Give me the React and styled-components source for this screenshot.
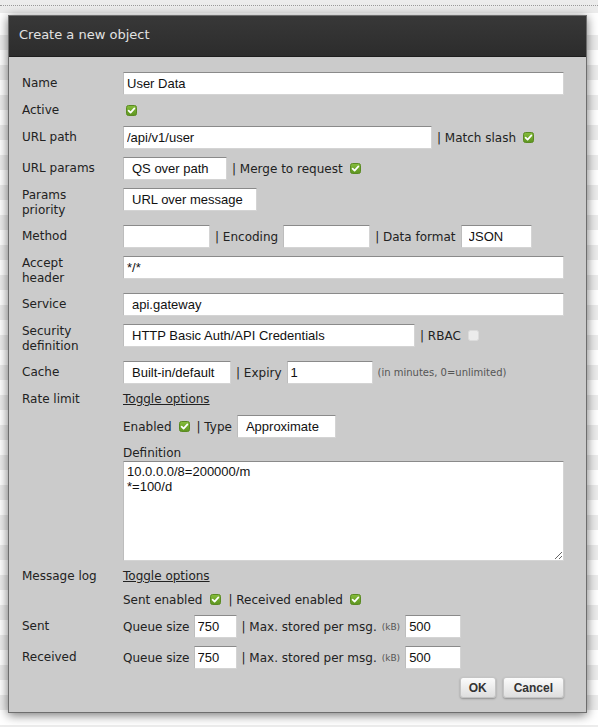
import React from 'react'
import styled, { createGlobalStyle } from 'styled-components'

const GlobalStyle = createGlobalStyle`
  html, body {
    margin: 0;
    padding: 0;
  }
  body {
    min-height: 727px;
    background-color: #fff;
    background-image: repeating-linear-gradient(
      to bottom,
      #ffffff 0px,
      #ffffff 15px,
      #ececec 15px,
      #ececec 30px
    );
    background-position: 0 20px;
    font-family: "DejaVu Sans", Verdana, sans-serif;
    color: #222;
  }
`

const Page = styled.div`
  padding: 5px 11px 12px 8px;
`

const TopRule = styled.div`
  border-top: 1px dotted #9a9a9a;
  margin: 0 -11px 9px -8px;
`

const Dialog = styled.div`
  width: 579px;
  background: #cbcbcb;
  border: 1px solid #6e6e6e;
  box-sizing: border-box;
  box-shadow: 0 2px 10px rgba(0, 0, 0, 0.55);
`

const Header = styled.div`
  height: 40px;
  line-height: 37px;
  padding-left: 10px;
  background: linear-gradient(to bottom, #383838, #2c2c2c);
  border-bottom: 1px solid #1e1e1e;
  color: #e2e2e2;
  font-size: 13px;
`

const Body = styled.div`
  padding: 15px 22px 14px 13px;
`

const Row = styled.div`
  display: flex;
  align-items: flex-start;
  margin-bottom: 8px;
`

const Label = styled.div`
  width: 101px;
  flex-shrink: 0;
  font-size: 12px;
  line-height: ${p => p.$lh || 23}px;
`

const Field = styled.div`
  flex: 1;
  display: flex;
  align-items: center;
  flex-wrap: wrap;
  font-size: 12px;
  min-height: ${p => p.$h || 23}px;
`

const Input = styled.input`
  box-sizing: border-box;
  width: ${p => p.$w}px;
  height: 23px;
  margin: 0 0 0 ${p => p.$ml || 0}px;
  padding: 0 0 0 ${p => p.$pad || 3}px;
  border: 1px solid #d4d4d4;
  border-top-color: #8a8a8a;
  border-left-color: #bdbdbd;
  background: #fff;
  font-family: "Liberation Sans", Arial, sans-serif;
  font-size: 13px;
  color: #111;
  outline: none;
`

const Area = styled.textarea`
  box-sizing: border-box;
  display: block;
  width: 441px;
  height: 100px;
  margin: 0;
  padding: 2px 3px;
  border: 1px solid #d4d4d4;
  border-top-color: #8a8a8a;
  border-left-color: #bdbdbd;
  background: #fff;
  font-family: "Liberation Sans", Arial, sans-serif;
  font-size: 13px;
  line-height: 15px;
  color: #111;
  outline: none;
`

const Sep = styled.span`
  margin: 0 5px 0 ${p => p.$ml ?? 5}px;
  white-space: nowrap;
`

const Hint = styled.span`
  margin-left: ${p => p.$ml ?? 5}px;
  font-size: ${p => p.$size || 10}px;
  color: #555;
  white-space: nowrap;
`

const Toggle = styled.a`
  color: #222;
  text-decoration: underline;
  font-size: 12px;
  line-height: 15px;
  cursor: pointer;
`

const Stack = styled.div`
  display: flex;
  flex-direction: column;
`

const Caption = styled.div`
  font-size: 12px;
  line-height: 15px;
`

const Box = styled.span`
  display: inline-flex;
  margin-left: ${p => p.$ml ?? 7}px;
  width: 11px;
  height: 11px;
`

const Buttons = styled.div`
  display: flex;
  justify-content: flex-end;
  gap: 7px;
  margin-top: 2px;
`

const Button = styled.button`
  height: 21px;
  padding: 0 ${p => p.$px || 10}px;
  border: 1px solid #c4c4c4;
  border-radius: 3px;
  background: linear-gradient(to bottom, #fbfbfb, #dedede);
  box-shadow: 0 1px 2px rgba(0, 0, 0, 0.3);
  font-family: "Liberation Sans", Arial, sans-serif;
  font-weight: bold;
  font-size: 12px;
  color: #333;
`

// green rounded tick box, or a pale empty one
const Check = ({ on = true, ml }) => (
  <Box $ml={ml}>
    <svg width="11" height="11" viewBox="0 0 11 11">
      <defs>
        <linearGradient id="cbg" x1="0" y1="0" x2="0" y2="1">
          <stop offset="0" stopColor="#86bd3c" />
          <stop offset="1" stopColor="#5d9420" />
        </linearGradient>
      </defs>
      {on ? (
        <>
          <rect x="0.5" y="0.5" width="10" height="10" rx="2" fill="url(#cbg)" stroke="#5a8a22" />
          <path d="M2.6 5.6 L4.6 7.6 L8.4 3.4" fill="none" stroke="#fff" strokeWidth="1.7" strokeLinecap="round" strokeLinejoin="round" />
        </>
      ) : (
        <rect x="0.5" y="0.5" width="10" height="10" rx="2" fill="#ececec" stroke="#dcdcdc" />
      )}
    </svg>
  </Box>
)

const App = () => (
  <>
    <GlobalStyle />
    <Page>
      <TopRule />
      <Dialog>
        <Header>Create a new object</Header>
        <Body>
          <Row>
            <Label>Name</Label>
            <Field>
              <Input $w={441} defaultValue="User Data" />
            </Field>
          </Row>
          <Row>
            <Label $lh={15}>Active</Label>
            <Field $h={15}>
              <Check ml={3} />
            </Field>
          </Row>
          <Row>
            <Label>URL path</Label>
            <Field>
              <Input $w={309} defaultValue="/api/v1/user" />
              <Sep>| Match slash</Sep>
              <Check ml={2} />
            </Field>
          </Row>
          <Row>
            <Label>URL params</Label>
            <Field>
              <Input $w={104} $pad={8} defaultValue="QS over path" />
              <Sep>| Merge to request</Sep>
              <Check ml={2} />
            </Field>
          </Row>
          <Row>
            <Label $lh={14.5}>Params<br />priority</Label>
            <Field>
              <Input $w={134} $pad={8} defaultValue="URL over message" />
            </Field>
          </Row>
          <Row>
            <Label>Method</Label>
            <Field>
              <Input $w={87} />
              <Sep>| Encoding</Sep>
              <Input $w={87} />
              <Sep>| Data format</Sep>
              <Input $w={71} $pad={7} defaultValue="JSON" />
            </Field>
          </Row>
          <Row>
            <Label $lh={14.5}>Accept<br />header</Label>
            <Field>
              <Input $w={441} defaultValue="*/*" />
            </Field>
          </Row>
          <Row>
            <Label>Service</Label>
            <Field>
              <Input $w={441} $pad={8} defaultValue="api.gateway" />
            </Field>
          </Row>
          <Row>
            <Label $lh={14.5}>Security<br />definition</Label>
            <Field>
              <Input $w={292} $pad={8} defaultValue="HTTP Basic Auth/API Credentials" />
              <Sep>| RBAC</Sep>
              <Check on={false} ml={2} />
            </Field>
          </Row>
          <Row>
            <Label>Cache</Label>
            <Field>
              <Input $w={108} $pad={8} defaultValue="Built-in/default" />
              <Sep>| Expiry</Sep>
              <Input $w={86} defaultValue="1" />
              <Hint>(in minutes, 0=unlimited)</Hint>
            </Field>
          </Row>
          <Row>
            <Label $lh={15}>Rate limit</Label>
            <Field $h={15}>
              <Toggle>Toggle options</Toggle>
            </Field>
          </Row>
          <Row>
            <Label />
            <Field>
              Enabled
              <Check ml={7} />
              <Sep $ml={7}>| Type</Sep>
              <Input $w={99} $pad={8} defaultValue="Approximate" />
            </Field>
          </Row>
          <Row>
            <Label />
            <Stack>
              <Caption>Definition</Caption>
              <Area defaultValue={'10.0.0.0/8=200000/m\n*=100/d'} />
            </Stack>
          </Row>
          <Row>
            <Label $lh={15}>Message log</Label>
            <Field $h={15}>
              <Toggle>Toggle options</Toggle>
            </Field>
          </Row>
          <Row>
            <Label $lh={15} />
            <Field $h={15}>
              Sent enabled
              <Check ml={8} />
              <Sep $ml={7}>| Received enabled</Sep>
              <Check ml={2} />
            </Field>
          </Row>
          <Row>
            <Label>Sent</Label>
            <Field>
              Queue size
              <Input $w={43} $ml={4} defaultValue="750" />
              <Sep>| Max. stored per msg.</Sep>
              <Hint $ml={0} $size={9}>(kB)</Hint>
              <Input $w={56} $ml={5} defaultValue="500" />
            </Field>
          </Row>
          <Row>
            <Label>Received</Label>
            <Field>
              Queue size
              <Input $w={43} $ml={4} defaultValue="750" />
              <Sep>| Max. stored per msg.</Sep>
              <Hint $ml={0} $size={9}>(kB)</Hint>
              <Input $w={56} $ml={5} defaultValue="500" />
            </Field>
          </Row>
          <Buttons>
            <Button $px={8}>OK</Button>
            <Button $px={10}>Cancel</Button>
          </Buttons>
        </Body>
      </Dialog>
    </Page>
  </>
)

export default App
